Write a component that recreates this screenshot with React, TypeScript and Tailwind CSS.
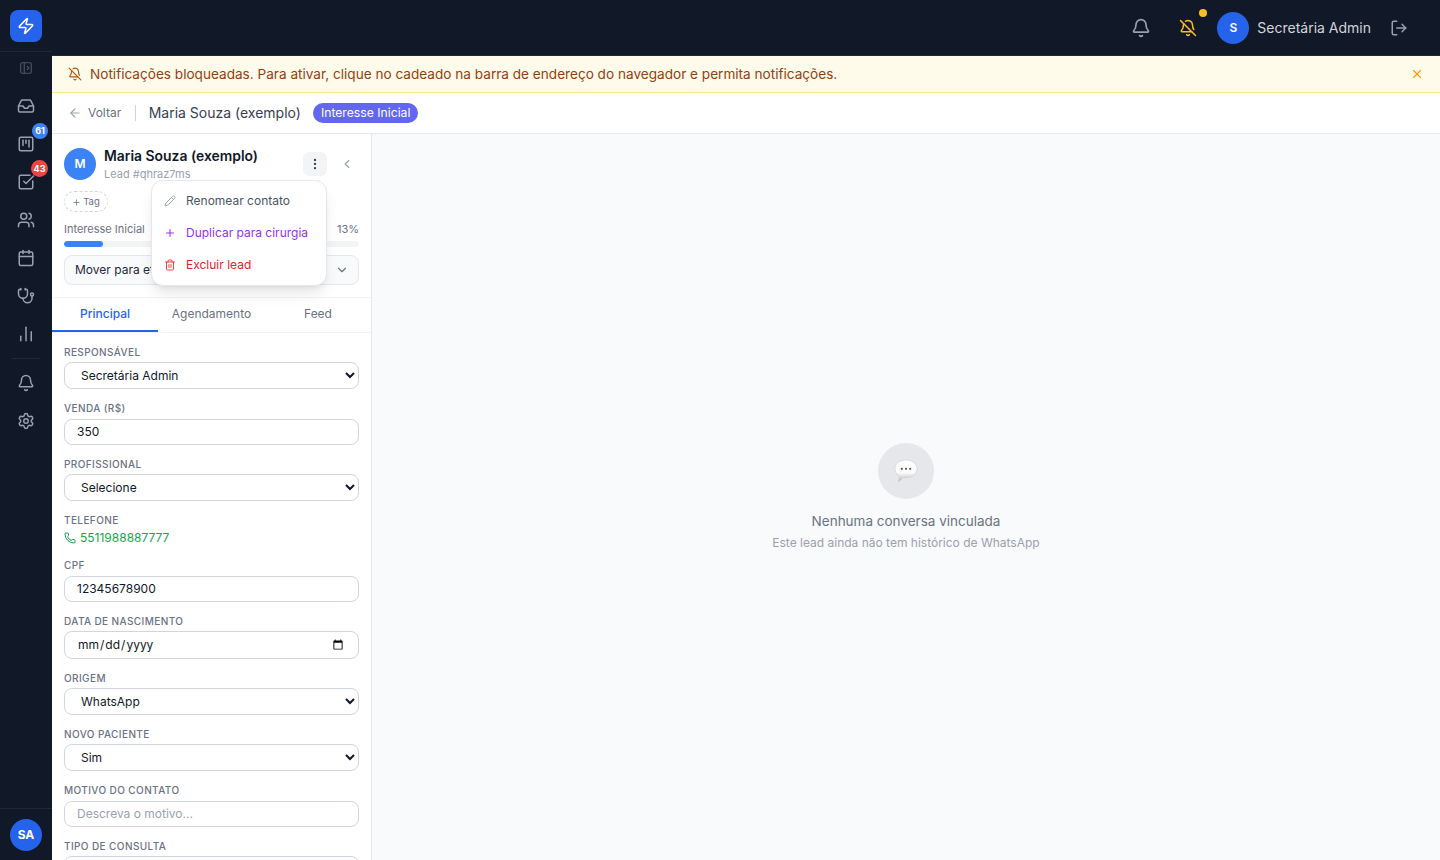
import {
  ArrowLeft,
  Bell,
  BellOff,
  Calendar,
  ChartNoAxesColumn,
  ChevronDown,
  ChevronLeft,
  EllipsisVertical,
  Inbox,
  LogOut,
  PanelLeftOpen,
  Pencil,
  Phone,
  Plus,
  Settings,
  SquareCheckBig,
  SquareKanban,
  Stethoscope,
  Trash2,
  Users,
  X,
  Zap,
} from "lucide-react";

const fieldLabel = "block h-[15px] text-[10px] leading-[15px] font-medium uppercase tracking-[0.04em] text-gray-500";
const selectClass = "mt-0.5 block h-[27px] w-full rounded-lg border border-gray-300 bg-white px-3 text-xs text-gray-900";
const inputClass = "mt-[3px] block h-[26px] w-full rounded-lg border border-gray-300 bg-white px-3 pb-0.5 text-xs text-gray-900 placeholder:text-gray-400";

function Field({ label, children }: { label: string; children: React.ReactNode }) {
  return (
    <div>
      <label className={fieldLabel}>{label}</label>
      {children}
    </div>
  );
}

function Sidebar() {
  const navBtn = "relative flex h-[38px] w-full items-center justify-center text-gray-400";
  return (
    <aside className="flex h-full w-[52px] shrink-0 flex-col bg-[#111827]">
      <div className="flex h-[52px] shrink-0 items-start justify-center border-b border-gray-800 pt-2.5">
        <div className="flex h-8 w-8 items-center justify-center rounded-lg bg-[#2563eb]">
          <Zap size={18} className="text-white" />
        </div>
      </div>
      <button className="flex h-8 shrink-0 items-center justify-center text-gray-600">
        <PanelLeftOpen size={14} />
      </button>
      <nav className="mt-[3px] flex flex-col">
        <button className={navBtn}><Inbox size={18} /></button>
        <button className={navBtn}>
          <SquareKanban size={18} />
          <span className="absolute left-[32px] -top-[2px] flex h-4 w-4 items-center justify-center rounded-full bg-[#3b82f6] text-[9px] font-bold text-white">61</span>
        </button>
        <button className={navBtn}>
          <SquareCheckBig size={18} />
          <span className="absolute left-[31px] -top-[3px] flex h-[17px] w-[17px] items-center justify-center rounded-full bg-[#ef4444] text-[9px] font-bold text-white">43</span>
        </button>
        <button className={navBtn}><Users size={18} /></button>
        <button className={navBtn}><Calendar size={18} /></button>
        <button className={navBtn}><Stethoscope size={18} /></button>
        <button className={navBtn}><ChartNoAxesColumn size={18} /></button>
        <div className="mx-3 mb-[5px] mt-[5px] border-t border-gray-800" />
        <button className={navBtn}><Bell size={18} /></button>
        <button className={navBtn}><Settings size={18} /></button>
      </nav>
      <div className="mt-auto flex h-[52px] items-center justify-center border-t border-gray-800">
        <div className="flex h-8 w-8 items-center justify-center rounded-full bg-[#2563eb] text-xs font-bold text-white">SA</div>
      </div>
    </aside>
  );
}

function ActionsMenu() {
  return (
    <div className="absolute left-[99px] top-[46px] z-10 w-[176px] rounded-xl border border-gray-200 bg-white py-1 text-xs shadow-lg">
      <div className="flex h-8 items-center gap-2.5 px-3 text-gray-600">
        <Pencil size={12} className="text-gray-400" />
        Renomear contato
      </div>
      <div className="flex h-8 items-center gap-2.5 px-3 text-[#9333ea]">
        <Plus size={12} />
        Duplicar para cirurgia
      </div>
      <div className="flex h-8 items-center gap-2.5 px-3 text-[#dc2626]">
        <Trash2 size={12} className="text-[#ef4444]" />
        Excluir lead
      </div>
    </div>
  );
}

function LeadPanel() {
  return (
    <div className="h-full w-[320px] shrink-0 overflow-hidden border-r border-gray-200 bg-white">
      <div className="relative h-[164px] border-b border-gray-100 px-3 pt-3.5">
        <div className="flex h-8 items-center gap-2">
          <div className="flex h-8 w-8 shrink-0 items-center justify-center rounded-full bg-[#3b82f6] text-xs font-semibold text-white">M</div>
          <div className="min-w-0 flex-1 pt-px">
            <p className="text-[13.9px] font-semibold leading-[18px] text-gray-900">Maria Souza (exemplo)</p>
            <p className="mt-px text-[11px] leading-[16px] text-gray-400">Lead #qhraz7ms</p>
          </div>
          <button className="flex h-6 w-6 items-center justify-center rounded-md bg-gray-100 text-gray-700">
            <EllipsisVertical size={14} />
          </button>
          <button className="flex h-6 w-6 items-center justify-center text-gray-400">
            <ChevronLeft size={14} />
          </button>
        </div>
        <ActionsMenu />
        <div className="mt-[11px] flex h-[21px] w-11 items-center justify-center gap-0.5 rounded-full border border-dashed border-gray-300 pt-0.5 text-[9.5px] text-gray-500">
          <Plus size={9} />
          Tag
        </div>
        <div className="mt-[9px] flex items-center justify-between text-[11px] leading-4 text-gray-500">
          <span>Interesse Inicial</span>
          <span>13%</span>
        </div>
        <div className="mt-1 h-1.5 overflow-hidden rounded-full bg-gray-100">
          <div className="h-full w-[39px] rounded-full bg-[#3b82f6]" />
        </div>
        <div className="mt-2 flex h-[30px] items-center justify-between rounded-lg border border-gray-200 bg-gray-50 pl-2.5 pr-[9px] text-xs text-gray-800">
          Mover para etapa...
          <ChevronDown size={14} className="text-gray-500" />
        </div>
      </div>

      <div className="flex h-[35px] border-b border-gray-100 text-xs">
        <div className="flex w-[106px] items-center justify-center border-b-2 border-[#2563eb] font-medium text-[#2563eb]">Principal</div>
        <div className="flex w-[107px] items-center justify-center pb-0.5 text-gray-500">Agendamento</div>
        <div className="flex w-[106px] items-center justify-center pb-0.5 text-gray-500">Feed</div>
      </div>

      <form className="flex flex-col gap-3 px-3 pt-3">
        <Field label="Responsável">
          <select className={selectClass} defaultValue="Secretária Admin">
            <option>Secretária Admin</option>
          </select>
        </Field>
        <Field label="Venda (R$)">
          <input className={inputClass} defaultValue="350" />
        </Field>
        <Field label="Profissional">
          <select className={selectClass} defaultValue="Selecione">
            <option>Selecione</option>
          </select>
        </Field>
        <Field label="Telefone">
          <div className="flex h-[18px] items-center gap-1 pt-0.5 text-xs text-[#16a34a]">
            <Phone size={12} />
            5511988887777
          </div>
        </Field>
        <Field label="CPF">
          <input className={inputClass} defaultValue="12345678900" />
        </Field>
        <Field label="Data de nascimento">
          <input type="date" className="mt-0.5 block h-7 w-full rounded-lg border border-gray-300 bg-white px-3 text-xs text-gray-900" />
        </Field>
        <Field label="Origem">
          <select className={selectClass} defaultValue="WhatsApp">
            <option>WhatsApp</option>
          </select>
        </Field>
        <Field label="Novo paciente">
          <select className={selectClass} defaultValue="Sim">
            <option>Sim</option>
          </select>
        </Field>
        <Field label="Motivo do contato">
          <input className={inputClass} placeholder="Descreva o motivo..." />
        </Field>
        <Field label="Tipo de consulta">
          <select className={selectClass}>
            <option>Selecione</option>
          </select>
        </Field>
      </form>
    </div>
  );
}

function SpeechBubble() {
  return (
    <svg width="24" height="24" viewBox="0 0 24 24">
      <defs>
        <linearGradient id="bubble" x1="0" y1="0" x2="0" y2="1">
          <stop offset="0" stopColor="#ffffff" />
          <stop offset="0.6" stopColor="#fafafa" />
          <stop offset="1" stopColor="#b8b8bd" />
        </linearGradient>
      </defs>
      <path
        d="M12 1c6.200 0 11 3.700 11 8.800s-4.800 8.800-11 8.800c-1 0-2-.1-2.900-.3-1 1.800-2.800 3.500-5 4.200.8-1.400 1.200-3 1-5.300C2.700 15.500 1 12.900 1 9.800 1 4.700 5.800 1 12 1z"
        fill="url(#bubble)"
        stroke="#c4c4c9"
        strokeWidth="0.5"
      />
      <circle cx="7.800" cy="9.800" r="1.100" fill="#52525b" />
      <circle cx="12" cy="9.800" r="1.100" fill="#52525b" />
      <circle cx="16.200" cy="9.800" r="1.100" fill="#52525b" />
    </svg>
  );
}

export default function App() {
  return (
    <div className="flex h-screen w-full overflow-hidden bg-white font-['Inter',sans-serif]">
      <Sidebar />
      <div className="flex min-w-0 flex-1 flex-col">
        <header className="flex h-14 shrink-0 items-center justify-end border-b border-gray-800 bg-[#111827] pr-8">
          <button className="mr-[28px] text-gray-400"><Bell size={20} /></button>
          <button className="relative mr-5 text-[#fbbf24]">
            <BellOff size={18} />
            <span className="absolute -right-[10px] -top-[10px] h-2 w-2 rounded-full bg-[#fbbf24]" />
          </button>
          <div className="mr-2 flex h-8 w-8 items-center justify-center rounded-full bg-[#2563eb] text-xs font-semibold text-white">S</div>
          <span className="mr-[19px] text-sm text-gray-300">Secretária Admin</span>
          <button className="text-gray-400"><LogOut size={18} /></button>
        </header>

        <div className="flex h-[37px] shrink-0 items-center justify-between border-b border-[#fde68a] bg-[#fffbeb] pl-4 pr-4">
          <div className="flex items-center gap-2 pt-px text-[13.6px] text-[#92400e]">
            <BellOff size={14} className="text-[#b45309]" />
            Notificações bloqueadas. Para ativar, clique no cadeado na barra de endereço do navegador e permita notificações.
          </div>
          <X size={14} className="text-[#f59e0b]" />
        </div>

        <div className="flex h-[41px] shrink-0 items-center border-b border-gray-200 bg-white pl-4">
          <ArrowLeft size={14} className="text-gray-400" />
          <span className="ml-[6px] text-xs text-gray-500">Voltar</span>
          <span className="ml-[14px] h-4 w-px bg-gray-300" />
          <span className="ml-[12.5px] text-sm text-gray-700">Maria Souza (exemplo)</span>
          <span className="ml-3 flex h-5 items-center rounded-full bg-[#6366f1] px-2 text-[12.2px] text-white">Interesse Inicial</span>
        </div>

        <div className="flex min-h-0 flex-1">
          <LeadPanel />
          <main className="flex min-w-0 flex-1 flex-col items-center bg-[#f9fafb] pt-[309px]">
            <div className="flex h-14 w-14 items-center justify-center rounded-full bg-gray-200">
              <SpeechBubble />
            </div>
            <p className="mt-3 text-[13.5px] leading-5 text-gray-500">Nenhuma conversa vinculada</p>
            <p className="mt-1 text-xs leading-4 text-gray-400">Este lead ainda não tem histórico de WhatsApp</p>
          </main>
        </div>
      </div>
    </div>
  );
}
